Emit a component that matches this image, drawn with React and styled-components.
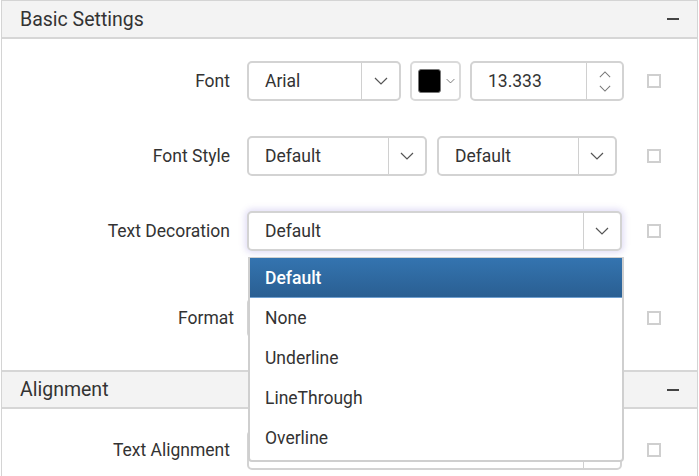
import React from "react";
import styled, { createGlobalStyle } from "styled-components";

const GlobalStyle = createGlobalStyle`
  html, body {
    margin: 0;
    padding: 0;
    background: #ffffff;
    overflow: hidden;
  }
  body {
    font-family: Roboto, "Liberation Sans", Arial, sans-serif;
    color: #333333;
  }
`;

const Page = styled.div`
  padding-left: 1px;
  height: 476px;
`;

const Panel = styled.div`
  width: 695px;
  border: 1px solid #d4d4d4;
  border-bottom: none;
  min-height: 480px;
`;

const SectionHeader = styled.div`
  display: flex;
  align-items: center;
  justify-content: space-between;
  height: ${({ $h }) => $h || 36}px;
  padding: 0 18px;
  background: #f3f3f3;
  border-top: ${({ $top }) => ($top ? "2px solid #d6d6d6" : "none")};
  border-bottom: 2px solid #d6d6d6;
  font-size: 19.5px;
  color: #333333;
`;

const Minus = styled.span`
  display: block;
  width: 12px;
  height: 2px;
  background: #444444;
`;

const SectionBody = styled.div`
  display: flex;
  flex-direction: column;
  gap: 35px;
  padding: ${({ $pt }) => $pt}px 0 ${({ $pb }) => $pb}px;
`;

const Row = styled.div`
  display: grid;
  grid-template-columns: 228px 394px 1fr;
  align-items: center;
  height: 40px;
  margin-top: ${({ $extra }) => $extra || 0}px;
`;

const Label = styled.div`
  text-align: right;
  font-size: 17.5px;
  color: #333333;
  margin-right: ${({ $mr }) => $mr || 0}px;
`;

const Controls = styled.div`
  display: flex;
  align-items: center;
  gap: ${({ $gap }) => $gap || 10}px;
  padding-left: 17px;
  height: 40px;
`;

const Field = styled.div`
  position: relative;
  box-sizing: border-box;
  flex: none;
  display: flex;
  align-items: stretch;
  width: ${({ $w }) => $w}px;
  height: 40px;
  border: 2px solid #d3d3d3;
  border-radius: 5px;
  background: #ffffff;
  box-shadow: ${({ $focus }) =>
    $focus ? "0 0 6px 2px rgba(120, 100, 210, 0.22)" : "none"};
  z-index: ${({ $focus }) => ($focus ? 2 : 1)};
`;

const FieldText = styled.div`
  flex: 1;
  display: flex;
  align-items: center;
  padding-left: 16px;
  font-size: 17.5px;
  color: #333333;
`;

const ArrowButton = styled.div`
  width: ${({ $w }) => $w || 35}px;
  display: flex;
  align-items: center;
  justify-content: center;
  border-left: 1px solid #d0d0d0;
`;

const Spinner = styled.div`
  width: 35px;
  display: flex;
  flex-direction: column;
  align-items: center;
  justify-content: center;
  gap: 7px;
  border-left: 1px solid #d0d0d0;
`;

const ColorField = styled.div`
  box-sizing: border-box;
  flex: none;
  display: flex;
  align-items: center;
  gap: 5px;
  width: 51px;
  height: 40px;
  padding-left: 6px;
  border: 2px solid #dadada;
  border-radius: 5px;
`;

const Swatch = styled.div`
  width: 23px;
  height: 24px;
  border-radius: 3px;
  background: #000000;
  border: 1px solid #777777;
  box-sizing: border-box;
`;

const CheckCell = styled.div`
  padding-left: 23px;
  display: flex;
  align-items: center;
`;

const Check = styled.div`
  box-sizing: border-box;
  width: 14px;
  height: 14px;
  border: 2px solid #cfcfcf;
  background: #ffffff;
`;

const Popup = styled.div`
  position: absolute;
  left: -1px;
  top: 44px;
  width: 376px;
  box-sizing: border-box;
  border: 2px solid #cfcfcf;
  border-top: 1px solid #cfcfcf;
  border-radius: 0 0 4px 4px;
  background: #ffffff;
  padding-bottom: 2px;
  z-index: 5;
`;

const Option = styled.div`
  height: 40px;
  display: flex;
  align-items: center;
  padding-left: 15px;
  font-size: 17.5px;
  color: ${({ $active }) => ($active ? "#ffffff" : "#333333")};
  font-weight: ${({ $active }) => ($active ? 500 : 400)};
  background: ${({ $active }) =>
    $active ? "linear-gradient(#3474b0, #2a5f92)" : "#ffffff"};
  border-bottom: ${({ $active }) => ($active ? "1px solid #6f9fd0" : "none")};
  box-sizing: border-box;
`;

const Chevron = ({ down = true, w = 14, h = 8, color = "#555" }) => (
  <svg width={w} height={h} viewBox="0 0 14 8">
    <polyline
      points={down ? "1,1 7,7 13,1" : "1,7 7,1 13,7"}
      fill="none"
      stroke={color}
      strokeWidth="1.2"
    />
  </svg>
);

const Dropdown = ({ w, value, focus, arrow = 35, children }) => (
  <Field $w={w} $focus={focus}>
    <FieldText>{value}</FieldText>
    <ArrowButton $w={arrow}>
      <Chevron />
    </ArrowButton>
    {children}
  </Field>
);

const options = ["Default", "None", "Underline", "LineThrough", "Overline"];

export default function App() {
  return (
    <Page>
      <GlobalStyle />
      <Panel>
        <SectionHeader>
          <span>Basic Settings</span>
          <Minus />
        </SectionHeader>
        <SectionBody $pt={22} $pb={32}>
          <Row>
            <Label>Font</Label>
            <Controls $gap={9}>
              <Dropdown w={154} value="Arial" arrow={37} />
              <ColorField>
                <Swatch />
                <Chevron w={9} h={6} color="#555" />
              </ColorField>
              <Field $w={154}>
                <FieldText>13.333</FieldText>
                <Spinner>
                  <Chevron down={false} w={12} h={7} color="#777" />
                  <Chevron w={12} h={7} color="#777" />
                </Spinner>
              </Field>
            </Controls>
            <CheckCell>
              <Check />
            </CheckCell>
          </Row>
          <Row>
            <Label>Font Style</Label>
            <Controls>
              <Dropdown w={180} value="Default" arrow={36} />
              <Dropdown w={180} value="Default" arrow={36} />
            </Controls>
            <CheckCell>
              <Check />
            </CheckCell>
          </Row>
          <Row>
            <Label>Text Decoration</Label>
            <Controls>
              <Dropdown w={375} value="Default" focus arrow={36}>
                <Popup>
                  {options.map((o, i) => (
                    <Option key={o} $active={i === 0}>
                      {o}
                    </Option>
                  ))}
                </Popup>
              </Dropdown>
            </Controls>
            <CheckCell>
              <Check />
            </CheckCell>
          </Row>
          <Row $extra={12}>
            <Label $mr={-4}>Format</Label>
            <Controls>
              <Dropdown w={375} value="" arrow={36} />
            </Controls>
            <CheckCell>
              <Check />
            </CheckCell>
          </Row>
        </SectionBody>
        <SectionHeader $top $h={35}>
          <span>Alignment</span>
          <Minus />
        </SectionHeader>
        <SectionBody $pt={21} $pb={20}>
          <Row>
            <Label>Text Alignment</Label>
            <Controls>
              <Dropdown w={375} value="" arrow={36} />
            </Controls>
            <CheckCell>
              <Check />
            </CheckCell>
          </Row>
        </SectionBody>
      </Panel>
    </Page>
  );
}
